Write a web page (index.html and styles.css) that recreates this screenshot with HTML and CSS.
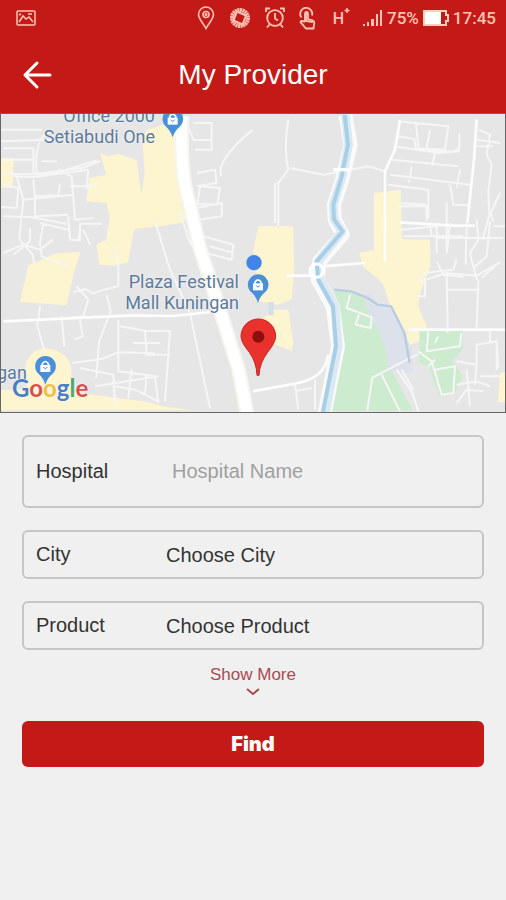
FILE: index.html
```html
<!DOCTYPE html>
<html lang="en">
<head>
    <meta charset="UTF-8">
    <meta name="viewport" content="width=device-width, initial-scale=1.0">
    <title>My Provider</title>
    <link rel="stylesheet" href="styles.css">
</head>
<body>
    <header class="header">
        <div class="status-bar">
            <svg class="status-photo" width="20" height="16" viewBox="0 0 20 16" fill="none" stroke="currentColor" stroke-width="1.5">
                <rect x="1" y="1" width="18" height="14" rx="1"/>
                <path d="M3 12l4-6 3 3 3-2 4 5M3 5l2-1M12 4h4"/>
            </svg>
            <div class="status-icons">
                <svg width="18" height="24" viewBox="0 0 18 24" fill="none" stroke="currentColor" stroke-width="1.6">
                    <path d="M9 22.500C6.500 17.500 1.500 13 1.500 8.500a7.500 7.500 0 0 1 15 0C16.500 13 11.500 17.500 9 22.500z"/>
                    <circle cx="9" cy="8.500" r="3"/>
                    <circle cx="9" cy="8.500" r="0.800" fill="currentColor"/>
                </svg>
                <svg width="24" height="22" viewBox="0 0 24 22" fill="none" stroke="currentColor">
                    <circle cx="12" cy="11" r="8" stroke-width="4" stroke-dasharray="2 0.500"/>
                    <path d="M9 4.500l9 4-3.500 9-9-4z" stroke-width="2"/>
                </svg>
                <svg width="20" height="22" viewBox="0 0 20 22" fill="none" stroke="currentColor" stroke-width="1.8">
                    <circle cx="10" cy="11" r="7.800"/>
                    <path d="M10 6v5.500l3 2M1 5V1.500h4M19 5V1.500h-4M4.500 17.500L2 20.500M15.500 17.500l2.500 3"/>
                </svg>
                <svg width="18" height="24" viewBox="0 0 18 24" fill="none" stroke="currentColor" stroke-width="1.8">
                    <path d="M3.500 11.500A6 6 0 1 1 14 9.500"/>
                    <path d="M7 15V8q0-2 1.500-2T10 8v5l5 1.500q1.500.500 1.300 2.500l-.800 5.500H8L2.500 16q1-2 4.500 0"/>
                    <path d="M8 7v8l7 1" />
                </svg>
                <span class="network">H<svg width="6" height="22" viewBox="0 0 6 22" stroke="currentColor" stroke-width="1.500"><path d="M3 1v5M0.500 3.500h5"/></svg></span>
                <svg width="20" height="18" viewBox="0 0 20 18" fill="currentColor">
                    <path d="M0 15h2v2H0zM4 13h2v4H4zM8 10h3v7H8zM13 5h2v12h-2zM17 1h2v16h-2z"/>
                </svg>
            </div>
            <span class="battery-level">75%</span>
            <svg width="26" height="16" viewBox="0 0 26 16">
                <path d="M1 1h22v4h2v6h-2v4H1z" fill="none" stroke="#ffd0b8" stroke-width="2"/>
                <rect x="2" y="2" width="16" height="12" fill="#fff"/>
            </svg>
            <span class="clock">17:45</span>
        </div>
        <div class="app-bar">
            <button type="button" class="back" aria-label="Back">
                <svg width="30" height="30" viewBox="0 0 30 30" fill="none" stroke="currentColor" stroke-width="3" stroke-linecap="round" stroke-linejoin="round">
                    <path d="M15 3L3 15l12 12M3 15h25"/>
                </svg>
            </button>
            <h1>My Provider</h1>
        </div>
    </header>

    <section class="map" aria-label="Map">
        <svg class="map-canvas" viewBox="3 3 1512 894" preserveAspectRatio="xMidYMid slice">
            <!-- built up areas -->
            <g fill="#fdf4d0">
                <path d="M0 136h42l-4 88H0zM300 120l25 10 30-8 55 20 14 100 10-60-6-90 10-40 60-20 40 10 34 250-20 36-60 10-90 10-8 45-10 55-40 10-45-3-10-60 30-15 10-70-10-40-60-5 10-70 50-10zM85 457l85-36 72-4-20 60-22 100-140-10zM75 770q5-60 65-64 70 10 75 70l-5 60 230 30 60 16 80 10H0v-60l80-5z"/>
                <path d="M775 340h104l4 130-8 88-42 18-58-12-10-110-5-44zM820 590h45l15 100-5 24-80-30-15-60zM1122 240l80-10 4 148 84 2 2 80-32 80-5 40 25 60-10 40-52 20-40-100-30-90-60-50-10-40 44-10zM1500 780l18-4v92h-24z"/>
            </g>
            <!-- parks -->
            <g fill="#cdebcf">
                <path d="M1003 530l50 10 60 20 40 80 20 60 6 80 60 114H970l40-170 15-90zM1258 655l130-2v58l-30 30 30 50-20 45-50 15-30-90-30-10z"/>
            </g>
            <path d="M1090 545l20-5 25 35 50 20 30 60 20 60 5 60-30 5-45-10-5-50-20-60-35-60z" fill="#dde1ec"/>
            <!-- side streets -->
            <g fill="none" stroke="#f6f6f6" stroke-width="6" stroke-linejoin="round">
                <path d="M5 50h120M5 85l150-5M10 106h90v76h60l130-40M10 140h90M110 182q-10-110 45-130M10 182l90 2 150-20 50-20M125 145h45M40 190l60 2 110-14 55-8M50 190l20 70-12 120 40 45 5 32M10 215l45 10-5 60-45-3M100 200l5 50 70-3 5-35M175 170l40 20 10 130 55-5M105 250v60l100-5M70 260l150-15M10 310l80 2 110 20M90 345v40l-50 40M130 330l-10 60 5 40 80 30M205 310l5 70 30 2v-50h65M240 345l-5 40M210 220h50l30-10M265 170l-5 60M10 420l60-25 50 15 40-30M120 330l85 20M250 350l20 45M345 400l10 60v60l-50 12-25 10-25-14-35 10M230 520l35 40-15 50-45 6"/>
                <path d="M560 30l20 50 55 2V30h-55M585 110h50V35M590 180l55-10 5 40-60 10M600 220l60 5-8 50-60-2zM590 285l75-15v40l-70 10M610 370l90 25-5 45-75-20M758 50q-110 90-95 140M630 400l70 20M540 300l30 90 35 40M465 325l45 145 60 130 25 120 35 165M320 545l12 50-35 90-8 110M120 580l-8 60 20 70M185 610l8 90M240 620l8 50-25 10M215 750l90-12 50-20 110 3M355 620v155l110 15 10 80M360 640l75 13 75 2-15 210M435 650l5 75h70M400 690h80M240 765l100 20 5 95M395 770l-10 85M440 785l-5 60M345 820l60 10 70 35M285 820l190-30"/>
                <path d="M865 20q-15 90 0 150l-30 40v130M825 210v120M870 165l100 20 135-25 50 15M1195 25l150 15-10 70-80-4-7-80M1193 70l50 8 5 30 110 8 20-10V60M1180 100l140 20 60-6M1175 140l200 20M1170 185l240 30M1165 215l120 15v85M1195 280h85v45M1290 50l-10 55M1305 120l-8 40M1235 160l-8 50M1350 215l10 60 50 2M1340 270v145M1200 270l80 5M1200 350l110-10v80M1210 370h180M1290 330l5 40 90 5M1380 170l-10 55M1400 325l-3 130M1435 50l35 15-10 60 15 30-10 80 3 70-20 75M1430 80l70 10M1420 100h60M1500 240l-28 60 8 25M1480 340h35M1430 320l5 60-25 40 20 80M1470 325l-10 105-40 35M1350 330l-10 90M1310 375h200"/>
                <path d="M1280 500l60-20 90 8 70-40M1340 480l3 180M1435 500l-5 150M1340 530h95M1270 480l90-10 10-30M1250 500h25v50h-25M1310 445l20 40 60 6M1485 460l-40 35M1470 650v40M1370 745l60 10v-60l60-10 5 80M1430 755l-5 60M1370 815l60-10 40 15M1440 790h60M1400 770l10 110M1370 870l30-40 50 5M1490 690v80M885 815l10 75M945 800v90M885 835l50-10M1050 545l-10 40 75 28-3 32-45-10 10-30M1102 892l15-98 135-70M1145 785l55 110M1190 770l45 65 20 60M1205 770l35 60M1285 655l-5 60 100-15 4-40M1305 690l10-20M1255 715l40 30 30 100 35-5 5-80-60 10M1285 760l20-20"/>
            </g>
            <!-- streets -->
            <g fill="none" stroke="#fdfdfd" stroke-width="8" stroke-linejoin="round">
                <path d="M10 625l180-8 210-10 120 2 110-12M1200 20l-15 90-30 65v270M1430 20l-8 120-20 190M1200 328l160 10h65M1225 650h290M860 488h80M965 460l130-10M759 835l110-20q110-15 115-90"/>
            </g>
            <!-- main road -->
            <path d="M546 10q-5 130 10 210l45 190 55 170 60 190 25 130" fill="none" stroke="#f6f5ef" stroke-width="44"/>
            <path d="M546 10q-5 130 10 210l45 190 55 170 60 190 25 130" fill="none" stroke="#fff" stroke-width="32"/>
            <!-- river -->
            <g fill="none" stroke-linejoin="round">
                <path d="M1036 5l16 90-24 100-26 80 2 45 24 45-70 80-5 55 45 80 16 120-40 200" stroke="#fafafa" stroke-width="42"/>
                <path d="M1036 5l10 90-20 100-26 80 2 45 24 35-70 90 5 55 44 80 9 120-38 200" stroke="#dbeaf2" stroke-width="26"/>
                <path d="M1034 5l10 90-20 100-24 80 2 45 26 35-78 90 5 55 44 80 9 120-40 200" stroke="#a9cfe8" stroke-width="12"/>
                <path d="M1003 530l50 5 50 20 30 20 40 5 40 80 16 90" stroke="#b9cde2" stroke-width="7"/>
                <path d="M1000 170h46" stroke="#fff" stroke-width="10"/>
                <circle cx="950" cy="473" r="20" stroke="#fff" stroke-width="9"/>
            </g>
            <!-- place markers -->
            <g>
                <g id="shop">
                    <path d="M518 73q-7-22-20-32a31 31 0 1 1 41 0q-14 10-21 32z" fill="#4a90d9"/>
                    <path d="M503 14h30v21h-30z" fill="#fff"/>
                    <path d="M509 15v-5q9-13 18 0v5" fill="none" stroke="#fff" stroke-width="5"/>
                    <path d="M512 20q6 10 12 0" fill="none" stroke="#4a90d9" stroke-width="3"/>
                </g>
                <use href="#shop" x="256" y="497"/>
                <use href="#shop" x="-382" y="742"/>
                <circle cx="762" cy="449" r="23" fill="#4285e8"/>
                <rect x="805" y="567" width="16" height="40" fill="#d3e0e8"/>
                <path d="M771 787q-1-38-23-69-25-30-25-48a51 51 0 0 1 104 0q0 18-24 48-24 31-26 69z" fill="#e9322e" stroke="#c62522" stroke-width="3"/>
                <circle cx="775" cy="671" r="18" fill="#8c0e0e"/>
            </g>
        </svg>
        <span class="place place-office">Office 2000<br>Setiabudi One</span>
        <span class="place place-plaza">Plaza Festival<br>Mall Kuningan</span>
        <span class="place place-edge">gan</span>
        <span class="google"><span class="g-blue">G</span><span class="g-red">o</span><span class="g-yellow">o</span><span class="g-blue">g</span><span class="g-green">l</span><span class="g-red">e</span></span>
    </section>

    <form class="search-form">
        <div class="field field-tall">
            <label for="hospital">Hospital</label>
            <input type="text" id="hospital" placeholder="Hospital Name">
        </div>
        <div class="field">
            <label for="city">City</label>
            <select id="city">
                <option>Choose City</option>
            </select>
        </div>
        <div class="field">
            <label for="product">Product</label>
            <select id="product">
                <option>Choose Product</option>
            </select>
        </div>
        <button type="button" class="show-more">
            Show More
            <svg width="14" height="8" viewBox="0 0 14 8" fill="none" stroke="currentColor" stroke-width="2">
                <path d="M1 1l6 5 6-5"/>
            </svg>
        </button>
        <button type="submit" class="find">Find</button>
    </form>
</body>
</html>
```

FILE: styles.css
```css
* {
    box-sizing: border-box;
}

body {
    margin: 0;
    min-height: 100vh;
    background-color: #f0f0f0;
    color: #333;
    font-family: "Liberation Sans", Arial, sans-serif;
}

button,
input,
select {
    font-family: inherit;
    border: none;
    background: none;
    padding: 0;
    margin: 0;
}

svg {
    display: block;
    flex-shrink: 0;
}

.header {
    background-color: #c41a17;
    color: #fff;
}

.status-bar {
    display: flex;
    align-items: center;
    height: 36px;
    padding: 0 10px 0 16px;
    gap: 4px;
    color: #ffc4b4;
    font-family: Roboto, sans-serif;
    font-size: 17px;
    font-weight: 500;
}

.status-photo {
    margin-right: auto;
}

.status-icons {
    display: flex;
    align-items: center;
    gap: 13px;
}

.network {
    display: flex;
    align-items: center;
    margin-left: 4px;
    font-size: 16px;
}

.app-bar {
    display: grid;
    grid-template-columns: 30px 1fr 30px;
    align-items: center;
    height: 77px;
    padding: 0 22px;
}

.back {
    color: #fff;
    cursor: pointer;
}

h1 {
    margin: 0;
    font-size: 28px;
    font-weight: normal;
    text-align: center;
}

.map {
    position: relative;
    height: 300px;
    border: 1px solid #666;
    background-color: #e6e6e6;
    overflow: hidden;
}

.map-canvas {
    width: 100%;
    height: 100%;
}

/* labels lie over the map */
.place {
    position: absolute;
    color: #5c7b9c;
    font-family: Roboto, sans-serif;
    font-size: 18px;
    line-height: 21px;
    text-align: right;
    text-shadow: 0 0 2px #fff;
}

.place-office {
    top: -9px;
    right: 350px;
}

.place-plaza {
    top: 157px;
    right: 266px;
}

.place-edge {
    top: 248px;
    left: -4px;
}

.google {
    position: absolute;
    left: 11px;
    top: 260px;
    font-family: Lato, sans-serif;
    font-size: 24px;
    font-weight: bold;
    line-height: 28px;
    text-shadow: 0 0 2px #fff;
}

.g-blue {
    color: #4a7fc8;
}

.g-red {
    color: #d9504a;
}

.g-yellow {
    color: #efc040;
}

.g-green {
    color: #4fa866;
}

.search-form {
    display: flex;
    flex-direction: column;
    padding: 22px;
}

.field {
    display: flex;
    align-items: center;
    height: 49px;
    margin-bottom: 22px;
    padding-left: 12px;
    border: 2px solid #c6c6c6;
    border-radius: 6px;
    font-size: 20px;
}

.field-tall {
    height: 73px;
}

.field label {
    width: 130px;
}

.field input,
.field select {
    flex: 1;
    min-width: 0;
    height: 100%;
    color: #333;
    font-size: 20px;
    appearance: none;
    outline: none;
}

.field input {
    padding-left: 6px;
}

.field input::placeholder {
    color: #a0a0a0;
}

.show-more {
    display: flex;
    flex-direction: column;
    align-items: center;
    align-self: center;
    gap: 2px;
    margin: -8px 0 25px;
    color: #a94a50;
    font-size: 17px;
    line-height: 22px;
    cursor: pointer;
}

.find {
    height: 46px;
    border-radius: 6px;
    background-color: #c41a17;
    color: #fff;
    font-family: Inter, sans-serif;
    font-size: 20px;
    font-weight: 900;
    cursor: pointer;
}

.find:hover {
    background-color: #ad1512;
}
```
